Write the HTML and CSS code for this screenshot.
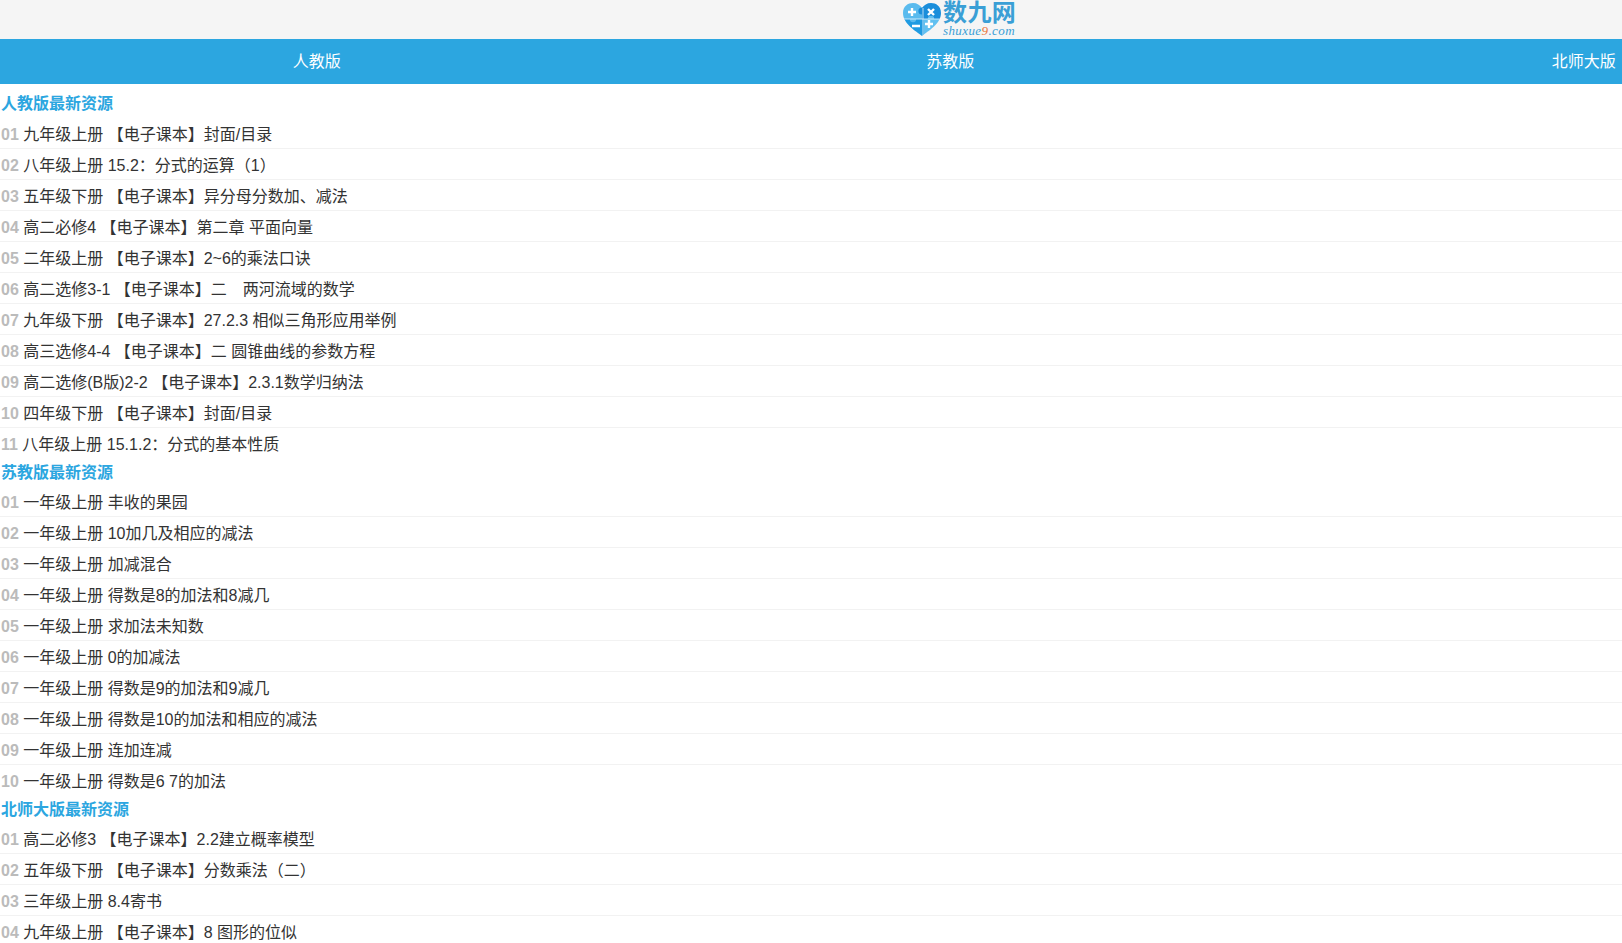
FILE: index.html
```html
<!DOCTYPE html>
<html lang="zh-CN">
<head>
    <meta charset="UTF-8">
    <meta name="viewport" content="width=device-width, initial-scale=1.0">
    <title>数九网</title>
    <link rel="stylesheet" href="styles.css">
</head>
<body>
    <header class="top">
        <a class="logo" href="#">
            <svg class="logo-heart" width="38" height="36" viewBox="0 0 38 36">
                <defs>
                    <clipPath id="heart">
                        <path d="M19 35 C13 30 0 23 0 12 C0 5 5 2 10 2 C14 2 17 4 19 7 C21 4 24 2 28 2 C33 2 38 5 38 12 C38 23 25 30 19 35 Z"/>
                    </clipPath>
                </defs>
                <g clip-path="url(#heart)">
                    <rect x="0" y="0" width="19" height="18" fill="#5abbee"/>
                    <rect x="19" y="0" width="19" height="18" fill="#1a8edb"/>
                    <rect x="0" y="18" width="21" height="18" fill="#1f9be2"/>
                    <rect x="21" y="18" width="17" height="18" fill="#62c0f0"/>
                    <circle cx="19" cy="10" r="3.6" fill="#1a8edb"/>
                    <circle cx="10" cy="18" r="3.2" fill="#5abbee"/>
                    <circle cx="28" cy="18" r="3.2" fill="#62c0f0"/>
                    <path d="M0 18 H38 M20 7 V36" stroke="#fff" stroke-width="0.7" fill="none"/>
                </g>
                <path d="M9 7 V15 M5 11 H13 M25 8 L31 14 M31 8 L25 14 M9 25 H17 M26 19 V27 M22 23 H30" stroke="#fff" stroke-width="2.4" fill="none"/>
            </svg>
            <span class="logo-text">
                <span class="logo-name">数九网</span>
                <span class="logo-url">shuxue<em>9</em>.com</span>
            </span>
        </a>
    </header>

    <nav class="nav">
        <a href="#">人教版</a>
        <a href="#">苏教版</a>
        <a href="#">北师大版</a>
    </nav>

    <section class="block">
        <h2>人教版最新资源</h2>
        <ul>
            <li><b>01</b> 九年级上册 【电子课本】封面/目录</li>
            <li><b>02</b> 八年级上册 15.2：分式的运算（1）</li>
            <li><b>03</b> 五年级下册 【电子课本】异分母分数加、减法</li>
            <li><b>04</b> 高二必修4 【电子课本】第二章 平面向量</li>
            <li><b>05</b> 二年级上册 【电子课本】2~6的乘法口诀</li>
            <li><b>06</b> 高二选修3-1 【电子课本】二　两河流域的数学</li>
            <li><b>07</b> 九年级下册 【电子课本】27.2.3 相似三角形应用举例</li>
            <li><b>08</b> 高三选修4-4 【电子课本】二 圆锥曲线的参数方程</li>
            <li><b>09</b> 高二选修(B版)2-2 【电子课本】2.3.1数学归纳法</li>
            <li><b>10</b> 四年级下册 【电子课本】封面/目录</li>
            <li><b>11</b> 八年级上册 15.1.2：分式的基本性质</li>
        </ul>
    </section>

    <section class="block">
        <h2>苏教版最新资源</h2>
        <ul>
            <li><b>01</b> 一年级上册 丰收的果园</li>
            <li><b>02</b> 一年级上册 10加几及相应的减法</li>
            <li><b>03</b> 一年级上册 加减混合</li>
            <li><b>04</b> 一年级上册 得数是8的加法和8减几</li>
            <li><b>05</b> 一年级上册 求加法未知数</li>
            <li><b>06</b> 一年级上册 0的加减法</li>
            <li><b>07</b> 一年级上册 得数是9的加法和9减几</li>
            <li><b>08</b> 一年级上册 得数是10的加法和相应的减法</li>
            <li><b>09</b> 一年级上册 连加连减</li>
            <li><b>10</b> 一年级上册 得数是6 7的加法</li>
        </ul>
    </section>

    <section class="block">
        <h2>北师大版最新资源</h2>
        <ul>
            <li><b>01</b> 高二必修3 【电子课本】2.2建立概率模型</li>
            <li><b>02</b> 五年级下册 【电子课本】分数乘法（二）</li>
            <li><b>03</b> 三年级上册 8.4寄书</li>
            <li><b>04</b> 九年级上册 【电子课本】8 图形的位似</li>
        </ul>
    </section>
</body>
</html>
```
FILE: styles.css
```css
html, body {
    height: 100%;
    overflow: hidden;
}
body {
    margin: 0;
    padding: 0;
    background-color: #ffffff;
    font-family: "Liberation Sans", Arial, "Noto Sans CJK SC", sans-serif;
    font-size: 16px;
    color: #333333;
}
a {
    text-decoration: none;
}
.top {
    height: 39px;
    background-color: #f5f5f5;
    padding-left: 903px;
}
.logo {
    display: flex;
    align-items: flex-start;
    padding-top: 1px;
}
.logo-heart {
    flex: none;
}
.logo-text {
    display: flex;
    flex-direction: column;
    margin-left: 2px;
}
.logo-name {
    font-size: 24px;
    font-weight: bold;
    line-height: 24px;
    color: #3a9fd6;
    letter-spacing: 0.4px;
}
.logo-url {
    font-family: "Liberation Serif", serif;
    font-style: italic;
    font-size: 13px;
    line-height: 11px;
    letter-spacing: 0.4px;
    color: #3a9fd6;
}
.logo-url em {
    color: #e8773c;
}
.nav {
    display: flex;
    height: 45px;
    line-height: 45px;
    overflow: hidden;
    background-color: #2ca6e0;
}
.nav a {
    flex: 0 0 39.06%;
    text-align: center;
    color: #ffffff;
}
.block:first-of-type {
    padding-top: 7px;
}
.block:first-of-type h2 {
    line-height: 25px;
    padding-bottom: 2px;
}
.block h2 {
    margin: 0;
    padding-left: 1px;
    font-size: 16px;
    line-height: 27px;
    color: #2ca6e0;
}
.block ul {
    margin: 0;
    padding: 0;
    list-style: none;
}
.block li {
    height: 30px;
    line-height: 33px;
    padding-left: 1px;
    border-bottom: 1px solid #f2f2f2;
    white-space: nowrap;
}
.block li:last-child {
    border-bottom-color: transparent;
}
.block li b {
    color: #bbbbbb;
}
```
